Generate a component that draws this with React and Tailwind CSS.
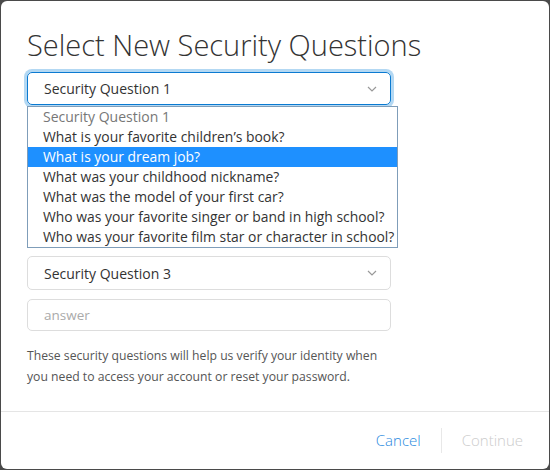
import React from "react";

const options = [
    "What is your favorite children’s book?",
    "What is your dream job?",
    "What was your childhood nickname?",
    "What was the model of your first car?",
    "Who was your favorite singer or band in high school?",
    "Who was your favorite film star or character in school?",
];

const Chevron = () => (
    <svg width="12" height="8" viewBox="0 0 12 8" className="text-[#999]">
        <path d="M2 2l4 4 4-4" fill="none" stroke="currentColor" strokeWidth="1.2" />
    </svg>
);

const App = () => {
    return (
        <div className="w-[550px] h-[470px] bg-[#4a4a4a] p-px font-['Open_Sans',sans-serif]">
            <div className="h-full bg-white rounded-md flex flex-col">
                <div className="flex-grow px-[26px] pt-[24px]">
                    <h1 className="text-[29px] leading-[40px] text-[#333] font-light">
                        Select New Security Questions
                    </h1>

                    {/* OPEN SELECT */}
                    <div className="relative mt-[7px] w-[364px]">
                        <div className="h-[33px] rounded-[5px] border border-[#0b7ad1] ring-[3px] ring-[#b3d8f3] flex items-center justify-between pl-[16px] pr-[12px]">
                            <span className="text-[14px] text-[#333]">Security Question 1</span>
                            <Chevron />
                        </div>

                        {/* OPTION LIST */}
                        <div className="absolute left-0 top-[34px] w-[371px] bg-white border border-[#7f9db9] z-10">
                            <div className="h-[20px] leading-[20px] pl-[15px] text-[14px] text-[#777]">
                                Security Question 1
                            </div>
                            {options.map((opt) => (
                                <div
                                    key={opt}
                                    className={`h-[20px] leading-[20px] pl-[15px] text-[13.9px] whitespace-nowrap ${
                                        opt === "What is your dream job?"
                                            ? "bg-[#1e90ff] text-white"
                                            : "text-[#333]"
                                    }`}
                                >
                                    {opt}
                                </div>
                            ))}
                        </div>
                    </div>

                    {/* HIDDEN BEHIND LIST */}
                    <div className="mt-[12px] w-[364px] h-[34px] rounded-[5px] border border-[#ddd]" />
                    <div className="mt-[12px] w-[364px] h-[34px] rounded-[5px] border border-[#ddd]" />
                    <div className="mt-[12px] w-[364px] h-[34px] rounded-[5px] border border-[#ddd]" />

                    <div className="mt-[13px] w-[364px] h-[34px] rounded-[5px] border border-[#ddd] flex items-center justify-between pl-[16px] pr-[12px]">
                        <span className="text-[14px] text-[#333]">Security Question 3</span>
                        <Chevron />
                    </div>

                    <div className="mt-[9px] w-[364px] h-[32px] rounded-[5px] border border-[#ddd] flex items-center pl-[16px]">
                        <span className="text-[13.5px] text-[#aaa]">answer</span>
                    </div>

                    <p className="mt-[14px] text-[12.2px] leading-[21px] text-[#555] w-[370px]">
                        These security questions will help us verify your identity when you
                        need to access your account or reset your password.
                    </p>
                </div>

                {/* FOOTER */}
                <div className="h-[58px] border-t border-[#e5e5e5] flex items-center justify-end pr-[26px]">
                    <button className="text-[15px] text-[#2a8ae0] font-light">Cancel</button>
                    <div className="mx-[20px] w-px h-[25px] bg-[#e8e8e8]" />
                    <button className="text-[15px] text-[#ccc] font-light">Continue</button>
                </div>
            </div>
        </div>
    );
};

export default App;
